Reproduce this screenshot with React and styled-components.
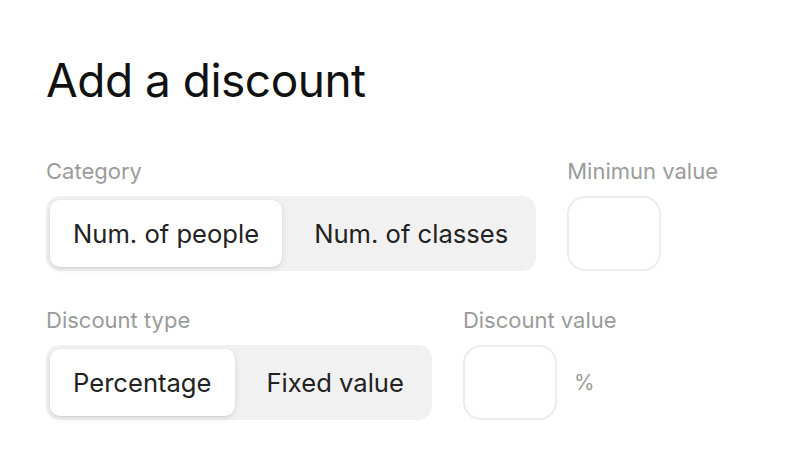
import React, { useState } from "react";
import styled, { createGlobalStyle } from "styled-components";

const Global = createGlobalStyle`
  html, body { margin: 0; padding: 0; background: #ffffff; }
  body { font-family: Inter, "Noto Sans", sans-serif; -webkit-font-smoothing: antialiased; }
`;

const Page = styled.div`
  width: 800px;
  height: 466px;
  box-sizing: border-box;
  padding: 52px 46px 0;
`;

const Title = styled.h1`
  margin: 0 0 50px;
  font-size: 46px;
  font-weight: 400;
  letter-spacing: -0.5px;
  line-height: 56px;
  color: #111;
`;

const Row = styled.div`
  display: flex;
  gap: 31px;
  margin-bottom: ${(p) => p.$mb || 0}px;
`;

const Field = styled.div`
  display: flex;
  flex-direction: column;
  gap: 12px;
`;

const Label = styled.div`
  font-size: 22px;
  line-height: 26px;
  color: #9b9b9b;
  font-weight: 400;
`;

const Segmented = styled.div`
  display: flex;
  gap: 8px;
  padding: 4px;
  height: 75px;
  box-sizing: border-box;
  background: #f1f1f1;
  border-radius: 14px;
`;

const Seg = styled.button`
  border: none;
  font-family: inherit;
  font-size: 25.6px;
  font-weight: 400;
  color: #222;
  padding: 0 ${(p) => (p.$active ? 23 : 24)}px;
  border-radius: 10px;
  cursor: pointer;
  background: ${(p) => (p.$active ? "#fff" : "transparent")};
  box-shadow: ${(p) =>
    p.$active ? "0 2px 6px rgba(0,0,0,0.10), 0 1px 2px rgba(0,0,0,0.06)" : "none"};
`;

const InputWrap = styled.div`
  display: flex;
  align-items: center;
  gap: 17px;
`;

const Box = styled.input`
  width: 94px;
  height: 75px;
  box-sizing: border-box;
  border: 2px solid #ececec;
  border-radius: 18px;
  background: #fff;
  outline: none;
  font-family: inherit;
  font-size: 22px;
  text-align: center;
`;

const Unit = styled.span`
  font-size: 21px;
  color: #9b9b9b;
`;

function SegGroup({ options, initial }) {
  const [sel, setSel] = useState(initial);
  return (
    <Segmented>
      {options.map((o, i) => (
        <Seg key={o} $active={sel === i} onClick={() => setSel(i)}>
          {o}
        </Seg>
      ))}
    </Segmented>
  );
}

export default function App() {
  return (
    <>
      <Global />
      <Page>
        <Title>Add a discount</Title>
        <Row $mb={36}>
          <Field>
            <Label>Category</Label>
            <SegGroup options={["Num. of people", "Num. of classes"]} initial={0} />
          </Field>
          <Field>
            <Label>Minimun value</Label>
            <InputWrap>
              <Box />
            </InputWrap>
          </Field>
        </Row>
        <Row>
          <Field>
            <Label>Discount type</Label>
            <SegGroup options={["Percentage", "Fixed value"]} initial={0} />
          </Field>
          <Field>
            <Label>Discount value</Label>
            <InputWrap>
              <Box />
              <Unit>%</Unit>
            </InputWrap>
          </Field>
        </Row>
      </Page>
    </>
  );
}
